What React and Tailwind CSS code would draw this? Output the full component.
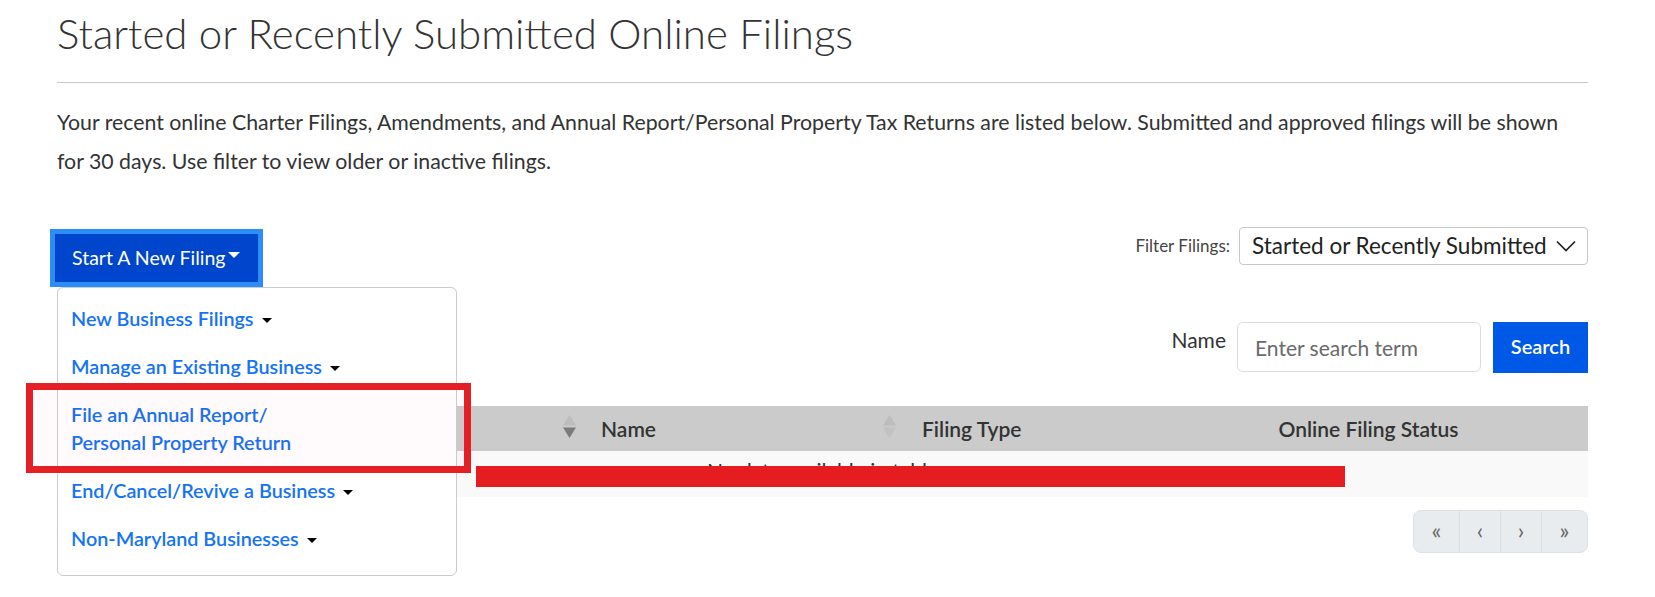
import React from "react";

function SortIcon({ active }) {
  return (
    <svg width="13" height="23" viewBox="0 0 13 23" className="absolute right-[14px] top-[9px]">
      <path d="M6.5 0 L13 10.5 L0 10.5 Z" fill="#bdbdbd" />
      <path d="M0 12.5 L13 12.5 L6.5 23 Z" fill={active ? "#7b7b7b" : "#c2c2c2"} />
    </svg>
  );
}

function Caret() {
  return (
    <span className="ml-[8px] inline-block h-0 w-0 border-x-[5px] border-t-[5px] border-x-transparent border-t-black align-middle" />
  );
}

function MenuItem({ children, caret = true }) {
  return (
    <div className="px-[13px] py-[10px] text-[19.8px] font-semibold leading-[28px] text-[#1573f4]">
      {children}
      {caret && <Caret />}
    </div>
  );
}

export default function App() {
  return (
    <div className="min-h-[597px] bg-white font-['Lato',sans-serif] text-[#333]">
      <div className="ml-[57px] w-[1531px]">
        <div className="border-b border-[#c9c9c9] pb-[24px] pt-[8px]">
          <h1 className="text-[42px] font-light leading-[50px] text-[#333]">
            Started or Recently Submitted Online Filings
          </h1>
        </div>

        <div className="mt-[20px] text-[21.3px] leading-[39px] text-[#333]">
          <div className="whitespace-nowrap">
            Your recent online Charter Filings, Amendments, and Annual Report/Personal Property Tax Returns are listed below. Submitted and approved filings will be shown
          </div>
          <div className="whitespace-nowrap">for 30 days. Use filter to view older or inactive filings.</div>
        </div>

        <div className="mt-[46px] flex items-start justify-between">
          <div className="relative ml-[-2px] mt-[7px]">
            <button className="flex h-[48px] w-[203px] items-center bg-[#0046cc] pl-[17px] text-[19.5px] text-white ring-[5px] ring-[#2b8df5]">
              Start A New Filing
              <span className="mb-[7px] ml-[3px] inline-block h-0 w-0 border-x-[6px] border-t-[6px] border-x-transparent border-t-white" />
            </button>

            <div className="absolute left-[2px] top-[53px] z-10 h-[289px] w-[400px] rounded-[6px] border border-[#cccccc] bg-white pt-[6px]">
              <MenuItem>New Business Filings</MenuItem>
              <MenuItem>Manage an Existing Business</MenuItem>
              <div className="relative">
                <div className="px-[13px] py-[10px] text-[19.8px] font-semibold leading-[28px] text-[#1573f4]">
                  File an Annual Report/
                  <br />
                  Personal Property Return
                </div>
                <div className="pointer-events-none absolute -left-[32px] -top-[7px] h-[90px] w-[445px] border-[7px] border-[#e42026] bg-[rgba(230,0,90,0.018)]" />
              </div>
              <MenuItem>End/Cancel/Revive a Business</MenuItem>
              <MenuItem>Non-Maryland Businesses</MenuItem>
            </div>
          </div>

          <div className="flex items-center">
            <span className="text-[17px] text-[#444]">Filter Filings:</span>
            <div className="ml-[9px] flex h-[38px] w-[349px] items-center justify-between rounded-[4px] border border-[#c8c8c8] pl-[12px] pr-[11px]">
              <span className="text-[22.5px] text-[#222]">Started or Recently Submitted</span>
              <svg width="20" height="12" viewBox="0 0 20 12">
                <polyline points="1,1.5 10,10.5 19,1.5" fill="none" stroke="#222" strokeWidth="1.7" />
              </svg>
            </div>
          </div>
        </div>

        <div className="mt-[40px] flex items-start justify-end">
          <span className="mt-[4px] text-[21px] leading-[28px] text-[#333]">Name</span>
          <input
            type="text"
            placeholder="Enter search term"
            className="ml-[11px] h-[50px] w-[244px] rounded-[6px] border border-[#dcdcdc] pl-[17px] text-[21px] text-[#333] outline-none placeholder:text-[#6a6a6a]"
          />
          <button className="ml-[12px] h-[51px] w-[95px] bg-[#0058e6] pb-[3px] text-[20px] font-semibold text-white">
            Search
          </button>
        </div>

        <div className="mt-[33px]">
          <div className="grid h-[45px] grid-cols-[533px_320px_239px_439px] bg-[#cbcbcb] text-[21px] font-semibold text-[#333]">
            <div className="relative flex items-center pl-[12px]">
              Date
              <SortIcon active />
            </div>
            <div className="relative flex items-center pl-[11px]">
              Name
              <SortIcon />
            </div>
            <div className="flex items-center pl-[12px]">Filing Type</div>
            <div className="flex items-center justify-center">Online Filing Status</div>
          </div>
          <div className="relative h-[46px] bg-[#f9f9f9] text-center text-[21px] leading-[40px] text-[#333]">
            No data available in table
            <div className="absolute left-[419px] top-[15px] h-[21px] w-[869px] bg-[#e51c20]" />
          </div>
        </div>

        <div className="mt-[13px] flex justify-end">
          <div className="flex h-[43px] overflow-hidden rounded-[8px] border border-[#dee1e5] bg-[#e9ecef] text-[23px] leading-none text-[#666]">
            <span className="flex w-[45px] items-center justify-center pb-[3px]">«</span>
            <span className="flex w-[41px] items-center justify-center border-l border-[#dcdfe3] pb-[3px]">‹</span>
            <span className="flex w-[41px] items-center justify-center border-l border-[#dcdfe3] pb-[3px]">›</span>
            <span className="flex w-[46px] items-center justify-center border-l border-[#dcdfe3] pb-[3px]">»</span>
          </div>
        </div>
      </div>
    </div>
  );
}
